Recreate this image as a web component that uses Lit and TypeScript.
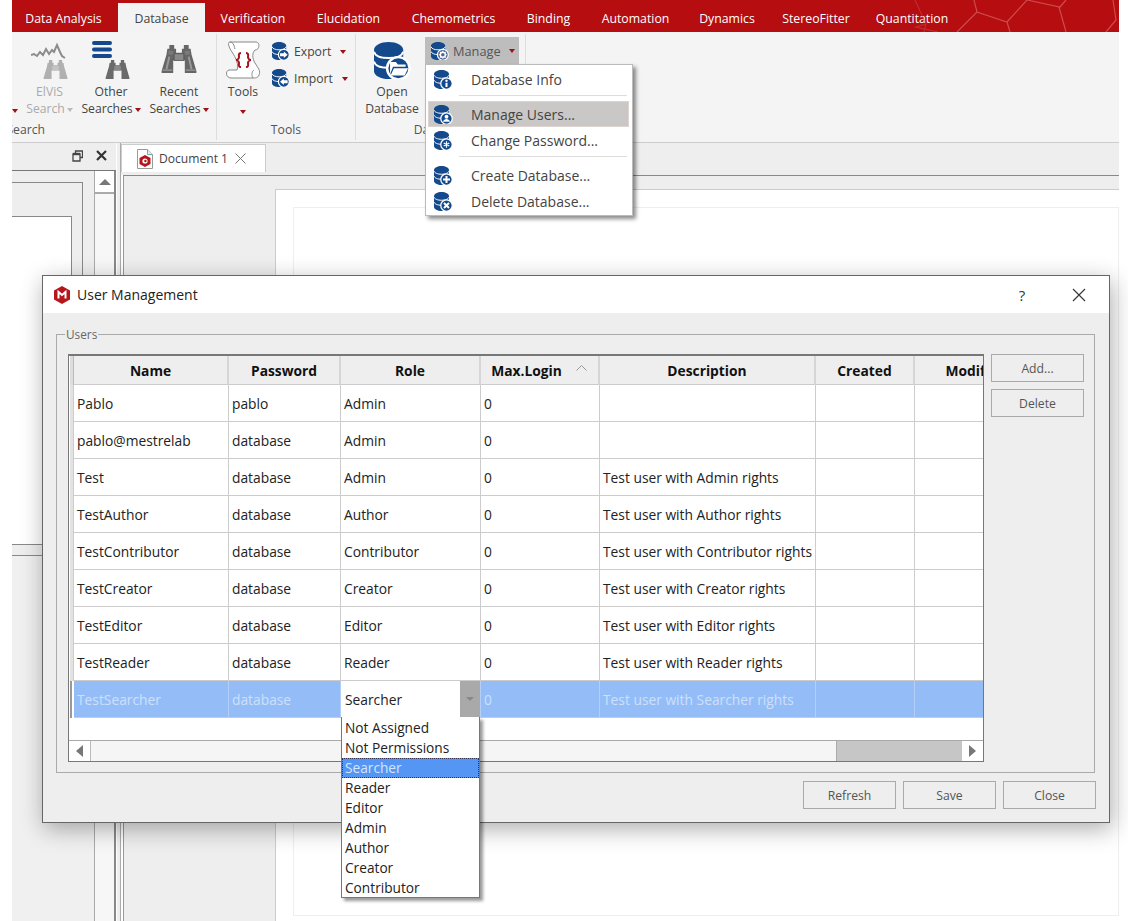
import { LitElement, html, css, svg } from "lit";
import { customElement } from "lit/decorators.js";

const NAVY = "#14498c";

function glyph(kind: string) {
  switch (kind) {
    case "info":
      return svg`<rect x="23" y="25.500" width="4" height="8.500" fill="#fff"/><circle cx="25" cy="21.500" r="2.400" fill="#fff"/>`;
    case "user":
      return svg`<circle cx="25" cy="23.500" r="3.800" fill="#fff"/><path d="M18 33.500c1-4 4-5.500 7-5.500s6 1.500 7 5.500z" fill="#fff"/>`;
    case "star":
      return svg`<g stroke="#fff" stroke-width="2.400"><path d="M25 20.500v13M19.400 23.800l11.200 6.400M30.600 23.800l-11.200 6.400"/></g>`;
    case "plus":
      return svg`<path d="M25 20v14M18 27h14" stroke="#fff" stroke-width="4"/>`;
    case "x":
      return svg`<path d="M20 22l10 10M30 22L20 32" stroke="#fff" stroke-width="4"/>`;
    case "right":
      return svg`<path d="M17 24h8v-4l8 7-8 7v-4h-8z" fill="#fff"/>`;
    case "left":
      return svg`<path d="M33 24h-8v-4l-8 7 8 7v-4h8z" fill="#fff"/>`;
    case "gear":
      return svg`<circle cx="25" cy="27" r="5.200" fill="none" stroke="#fff" stroke-width="3"/><g stroke="#fff" stroke-width="2.400"><path d="M25 18.500v3.400M25 32v3.400M16.500 27h3.400M30.100 27h3.400M19 21l2.400 2.400M28.600 30.600l2.400 2.400M31 21l-2.400 2.400M21.400 30.600L19 33"/></g>`;
    case "folder":
      return svg`<path d="M16.500 20.500h6l2 2.500h8v2.500H19.500l-3 7.500z" fill="#fff"/><path d="M20.500 27h14.500l-3.500 7.500H17z" fill="#fff"/>`;
  }
  return svg``;
}

function db(kind: string, size: number) {
  const bg = kind === "gear" ? "#4a6690" : NAVY;
  return html`<svg class="ic" width=${size} height=${size} viewBox="0 0 38 38">
    <path d="M0 8C0 3.500 7 0 15 0s15 3.500 15 8v22c0 4.500-7 8-15 8S0 34.500 0 30z" fill=${NAVY}/>
    <path d="M0 10c1 4 7 6.500 15 6.500S29 14 30 10M0 20c1 4 7 6.500 15 6.500S29 24 30 20" fill="none" stroke="#fff" stroke-width="2"/>
    <circle cx="25" cy="27" r="11.500" fill=${bg} stroke="#fff" stroke-width="2.500"/>
    ${glyph(kind)}
  </svg>`;
}

const BINOC = "M9 0h5v4h2v4h6V4h2V0h5v4h2l1 6 5 17v2H25V16h-12v13H1v-2L6 10l1-6h2z";

function binoc(color: string, w: number, h: number) {
  return html`<svg class="ic mt4" width=${w} height=${h} viewBox="0 0 38 30">
    <path d=${BINOC} fill=${color}/>
    <path d="M14 9h10v7H14z" fill="#8a8a8a" stroke="#555" stroke-width=".8"/>
    <path d="M8 6h5v4H8zM25 6h5v4h-5z" fill="#7a7a7a"/>
    <path d="M9 12l-3 13M29 12l3 13" stroke="#9a9a9a" stroke-width="2"/>
    <path d="M2 26h10M26 26h10" stroke="#9a9a9a" stroke-width="1.500"/>
  </svg>`;
}

const tabs: [string, number][] = [
  ["Data Analysis", 106],
  ["Database", 87],
  ["Verification", 96],
  ["Elucidation", 95],
  ["Chemometrics", 115],
  ["Binding", 75],
  ["Automation", 99],
  ["Dynamics", 84],
  ["StereoFitter", 94],
  ["Quantitation", 98],
];

const cols = [
  { n: "Name", w: 155 },
  { n: "Password", w: 112 },
  { n: "Role", w: 140 },
  { n: "Max.Login", w: 119 },
  { n: "Description", w: 216 },
  { n: "Created", w: 99 },
  { n: "Modified", w: 124 },
];

const users = [
  ["Pablo", "pablo", "Admin", ""],
  ["pablo@mestrelab", "database", "Admin", ""],
  ["Test", "database", "Admin", "Test user with Admin rights"],
  ["TestAuthor", "database", "Author", "Test user with Author rights"],
  ["TestContributor", "database", "Contributor", "Test user with Contributor rights"],
  ["TestCreator", "database", "Creator", "Test user with Creator rights"],
  ["TestEditor", "database", "Editor", "Test user with Editor rights"],
  ["TestReader", "database", "Reader", "Test user with Reader rights"],
  ["TestSearcher", "database", "Searcher", "Test user with Searcher rights"],
];

const roles = ["Not Assigned", "Not Permissions", "Searcher", "Reader", "Editor", "Admin", "Author", "Creator", "Contributor"];

@customElement("app-root")
export class AppRoot extends LitElement {
  static styles = css`
    :host { display: block; position: relative; width: 1128px; height: 921px; overflow: hidden; background: #fff;
      font-family: "Open Sans", "Noto Sans", sans-serif; color: #444; }
    .ic { display: block; flex: none; }
    .mt4 { margin-top: 4px; }
    .mt1 { margin-top: 1px; }
    .win { margin-left: 12px; width: 1107px; height: 921px; display: flex; flex-direction: column; }

    .top { position: relative; height: 32px; background: #b50d10; display: flex; flex: none; font-size: 12.300px; color: #fff; }
    .tab { display: flex; align-items: center; justify-content: center; height: 32px; padding-top: 5px; box-sizing: border-box; }
    .tab:first-child { padding-right: 3px; }
    .tab.on { background: #f3f3f3; color: #444; margin-top: 3px; height: 29px; padding-top: 2px; }
    .hex { position: absolute; right: 0; top: 0; }

    .ribbon { height: 110px; flex: none; display: flex; background: #f4f4f4; border-bottom: 1px solid #ccc; font-size: 12.200px; }
    .grp { display: flex; flex-direction: column; border-right: 1px solid #ddd; margin: 2px 0; box-sizing: border-box; overflow: hidden; }
    .g1 { width: 205px; } .g2 { width: 139px; } .g3 { width: 170px; }
    .acts { height: 87px; display: flex; flex: none; }
    .glabel { height: 17px; line-height: 17px; text-align: center; color: #555; white-space: nowrap; }
    .g1 .glabel { width: 33px; direction: rtl; overflow: hidden; text-align: left; }
    .big { display: flex; flex-direction: column; align-items: center; padding-top: 7px; box-sizing: border-box; line-height: 17px; white-space: nowrap; }
    .ibox { height: 42px; display: flex; align-items: flex-start; justify-content: center; flex: none; }
    .ln { height: 17px; display: flex; align-items: center; gap: 2px; }
    .dis { color: #aaa; }
    .ar { width: 0; height: 0; border: 3.500px solid transparent; border-top: 4px solid #a00f15; border-bottom: 0; flex: none; margin-top: 3px; }
    .ar.g { border-top-color: #bbb; }
    .ar.low { margin-top: 6px; }
    .stub { width: 10px; display: flex; align-items: flex-end; padding: 0 0 8px 0; box-sizing: border-box; }
    .b-elvis { width: 55px; }
    .b-other { width: 68px; }
    .b-recent { width: 68px; }
    .stack { display: flex; flex-direction: column; padding-top: 4px; }
    .row-btn { display: flex; align-items: center; height: 27px; gap: 4px; }
    .row-btn .ar { margin-left: 5px; margin-top: 0; }
    .row-btn .ic { margin-top: -2px; }
    .stack.t { margin-left: 8px; }
    .b-tools { width: 42px; margin-left: 5px; }
    .b-open { width: 62px; margin-left: 5px; }
    .mgbtn { margin: 3px 0 0 2px; width: 94px; height: 27px; background: #bdbdbd; display: flex; align-items: center; gap: 4px; padding-left: 6px; box-sizing: border-box; color: #555; font-size: 12.800px; }
    .mgbtn span { padding-top: 1px; }
    .mgbtn .ar { margin: 0 0 0 4px; }

    .low { flex: 1; display: flex; min-height: 0; }
    .dock { width: 104px; flex: none; display: flex; flex-direction: column; background: #eee; }
    .dhead { height: 27px; flex: none; display: flex; justify-content: flex-end; align-items: center; gap: 13px; padding: 0 9px 2px 0; box-sizing: border-box; background: #eee; }
    .dbody { flex: 1; display: flex; border-top: 1px solid #777; }
    .dmain { width: 82px; display: flex; flex-direction: column; }
    .dtop { height: 385px; flex: none; border-bottom: 1px solid #888; padding-top: 11px; box-sizing: border-box; }
    .fr1 { width: 71px; height: 363px; border: solid #888; border-width: 1px 1px 0 0; padding-top: 33px; box-sizing: border-box; }
    .fr2 { width: 60px; height: 329px; background: #fff; border: solid #888; border-width: 1px 1px 1px 0; box-sizing: border-box; }
    .dbot { flex: 1; background: #f0f0f0; }
    .vbar { flex: 1; background: #f7f7f7; border-left: 1px solid #aaa; border-right: 2px solid #888; display: flex; flex-direction: column; }
    .vup { height: 21px; background: #fff; border-bottom: 2px solid #aaa; display: flex; align-items: center; justify-content: center; }
    .tri-up { width: 0; height: 0; border: 6px solid transparent; border-bottom: 6px solid #777; border-top: 0; }
    .split { width: 3px; flex: none; background: #eee; margin-left: 1px; }
    .doc { flex: 1; display: flex; flex-direction: column; border-left: 1px solid #aaa; min-width: 0; }
    .dtabs { height: 32px; flex: none; background: #eee; padding-top: 1px; box-sizing: border-box; }
    .dtab { width: 145px; height: 28px; box-sizing: border-box; background: #fff; border: solid #ccc; border-width: 1px 1px 0 1px; display: flex; align-items: center; font-size: 12.100px; color: #444; padding-left: 15px; gap: 6px; }
    .dtab .cl { margin-left: 1px; }
    .frame { flex: 1; margin-left: 2px; border-left: 1px solid #999; border-top: 1px solid #888; background: #eee; padding: 13px 0 0 151px; display: flex; min-height: 0; }
    .page { flex: 1; background: #fff; border: solid #ccc; border-width: 1px 0 0 1px; padding: 17px 0 5px 17px; display: flex; }
    .sheet { flex: 1; border: 1px solid #eee; }

    .menu { position: absolute; left: 425px; top: 64px; width: 208px; height: 152px; box-sizing: border-box; background: #fff; border: 1px solid #bbb; box-shadow: 3px 3px 4px rgba(0,0,0,.45); padding: 1px 3px 0 2px; font-size: 14px; color: #444; }
    .mi { height: 26px; display: flex; align-items: center; padding-left: 6px; box-sizing: border-box; }
    .mi span { margin-left: 18px; }
    .mi.hl { background: #c9c8c7; outline: 1px solid #ddd3cf; outline-offset: -1px; }
    .sep { height: 1px; background: #ddd; margin: 3px 2px 5px 31px; }

    .dlg { position: absolute; left: 42px; top: 275px; width: 1068px; height: 548px; box-sizing: border-box; background: #eee; border: 1px solid #666; box-shadow: 2px 6px 22px rgba(0,0,0,.32); display: flex; flex-direction: column; }
    .dt { height: 37px; flex: none; background: #fff; display: flex; align-items: center; padding-left: 10px; font-size: 14px; color: #222; }
    .dt .ttl { margin-left: 6px; }
    .q { margin-left: auto; width: 20px; text-align: center; font-size: 15px; color: #333; margin-right: 40px; }
    .xb { margin-right: 23px; }
    .gb { margin: 21px 0 0 13px; width: 1039px; height: 439px; flex: none; box-sizing: border-box; border: 1px solid #aaa; padding: 0 10px 0 11px; display: flex; flex-direction: column; }
    .lg { align-self: flex-start; margin: -8px 0 0 -3px; height: 15px; line-height: 15px; padding: 0 1px; background: #eee; font-size: 11.800px; color: #666; }
    .gin { display: flex; gap: 7px; margin-top: 12px; }
    .table { width: 916px; height: 408px; flex: none; box-sizing: border-box; border: solid #777; border-width: 2px 1px 1px 1px; background: #fff; display: flex; flex-direction: column; overflow: hidden; font-size: 13.800px; color: #222; position: relative; }
    .tr { display: flex; flex: none; height: 37px; }
    .tr.h { height: 29px; background: #eee; }
    .rh { width: 5px; flex: none; box-sizing: border-box; background: #e2e2e2; border-right: 1px solid #ccc; border-left: 1px solid #fff; }
    .tr.h .rh { background: #ddd; border-right: 1px solid #bbb; }
    .th { flex: none; box-sizing: border-box; border-right: 2px solid #d6d6d6; border-bottom: 1px solid #ccc; display: flex; align-items: center; justify-content: center; font-weight: 700; color: #111; font-size: 13.800px; white-space: nowrap; position: relative; }
    .th.sort { padding-right: 26px; }
    .chev { position: absolute; right: 11px; top: 9px; }
    .td { flex: none; box-sizing: border-box; border-right: 1px solid #ccc; border-bottom: 1px solid #ccc; display: flex; align-items: center; padding-left: 3px; white-space: nowrap; overflow: hidden; }
    .tr.sel { background: #94bdf7; color: #cde0fb; }
    .tr.sel .td { border-color: #b3cef7; }
    .tr.sel .rh { background: #999; border-left: 1px solid #fff; border-right: 2px solid #fff; }
    .td.cb { padding: 0; }
    .combo { flex: 1; height: 36px; display: flex; background: #fff; color: #222; align-items: center; }
    .combo span { flex: 1; padding-left: 4px; }
    .drop { width: 20px; height: 36px; background: #a9a9a9; display: flex; align-items: center; justify-content: center; }
    .drop i { width: 0; height: 0; border: 4px solid transparent; border-top: 4px solid #888; border-bottom: 0; }
    .blank { flex: 1; }
    .hs { height: 21px; flex: none; display: flex; border-top: 1px solid #aaa; box-sizing: border-box; background: #f5f5f5; }
    .sb { width: 21px; background: #fff; display: flex; align-items: center; justify-content: center; flex: none; }
    .sb.l { border-right: 1px solid #bbb; }
    .track { flex: 1; }
    .thumb { width: 125px; background: #c6c6c6; border-left: 1px solid #aaa; flex: none; }
    .tri-l { width: 0; height: 0; border: 6px solid transparent; border-right: 7px solid #777; border-left: 0; }
    .tri-r { width: 0; height: 0; border: 6px solid transparent; border-left: 7px solid #777; border-right: 0; }
    .side { display: flex; flex-direction: column; gap: 7px; }
    .btn { width: 93px; height: 28px; box-sizing: border-box; border: 1px solid #aaa; background: #eee; display: flex; align-items: center; justify-content: center; font-size: 12.200px; color: #555; }
    .foot { display: flex; gap: 7px; justify-content: flex-end; margin: 8px 13px 0 0; }

    .list { position: absolute; left: 341px; top: 717px; width: 139px; height: 181px; box-sizing: border-box; background: #fff; border: 1px solid #777; border-top: 0; box-shadow: 3px 3px 3px rgba(0,0,0,.4); font-size: 13.700px; color: #222; padding-top: 1px; }
    .li { height: 20px; line-height: 20px; padding-left: 3px; box-sizing: border-box; white-space: nowrap; }
    .li.on { background: #5596f5; color: #d5e5fc; outline: 1px dotted #335; outline-offset: -1px; }
  `;

  private searchGroup() {
    return html`
      <div class="grp g1">
        <div class="acts">
          <div class="stub"><div class="ar"></div></div>
          <div class="big b-elvis dis">
            <div class="ibox">
              <svg class="ic" width="38" height="38" viewBox="0 0 38 38">
                <path d="M0 14l3-1 3 2 3-4 3 3 3-6 3 5 3-4 2 2 3-7 3 7 2 4 3 2" fill="none" stroke="#8c8c8c" stroke-width="2"/>
                <g transform="translate(12 19) scale(.66)">
                  <path d=${BINOC} fill="#b0b0b0"/>
                  <path d="M14 9h10v7H14z" fill="#c4c4c4"/>
                </g>
              </svg>
            </div>
            <div class="ln">ElViS</div>
            <div class="ln">Search<div class="ar g"></div></div>
          </div>
          <div class="big b-other">
            <div class="ibox">
              <svg class="ic" width="40" height="38" viewBox="0 0 40 38">
                <path d="M3 2h16M3 8.500h16M3 15h16" stroke=${NAVY} stroke-width="4" stroke-linecap="round"/>
                <g transform="translate(14 19) scale(.66)">
                  <path d=${BINOC} fill="#6a6a6a"/>
                  <path d="M14 9h10v7H14z" fill="#8a8a8a"/>
                </g>
              </svg>
            </div>
            <div class="ln">Other</div>
            <div class="ln">Searches<div class="ar"></div></div>
          </div>
          <div class="big b-recent">
            <div class="ibox">${binoc("#666", 38, 29)}</div>
            <div class="ln">Recent</div>
            <div class="ln">Searches<div class="ar"></div></div>
          </div>
        </div>
        <div class="glabel">Search</div>
      </div>`;
  }

  private toolsGroup() {
    return html`
      <div class="grp g2">
        <div class="acts">
          <div class="big b-tools">
            <div class="ibox">
              <svg class="ic" width="36" height="38" viewBox="0 0 36 38">
                <path d="M5 1H31C35 1 35 9 30 9C27 12 27 17 30 22C33 27 36 30 34 34C33 37 30 37 28 37H6C1 37 0 30 4 29H12C14 24 11 17 7 11C4 7 2 1 5 1z" fill="#fff" stroke="#888"/>
                <path d="M29 29c-2 1-3 5-1 8M5 1c3 0 4 3 5 7" fill="none" stroke="#888"/>
                <path d="M16 12c-3 0-2 3-2 4s-1 3-3 3c2 0 3 2 3 3s-1 4 2 4M21 12c3 0 2 3 2 4s1 3 3 3c-2 0-3 2-3 3s1 4-2 4" fill="none" stroke="#a3141a" stroke-width="2"/>
              </svg>
            </div>
            <div class="ln">Tools</div>
            <div class="ln"><div class="ar low"></div></div>
          </div>
          <div class="stack t">
            <div class="row-btn">${db("right", 18)}<span>Export</span><div class="ar"></div></div>
            <div class="row-btn">${db("left", 18)}<span>Import</span><div class="ar"></div></div>
          </div>
        </div>
        <div class="glabel">Tools</div>
      </div>`;
  }

  private dbGroup() {
    return html`
      <div class="grp g3">
        <div class="acts">
          <div class="big b-open">
            <div class="ibox"><div class="mt1">${db("folder", 37)}</div></div>
            <div class="ln">Open</div>
            <div class="ln">Database</div>
          </div>
          <div class="mgbtn">${db("gear", 18)}<span>Manage</span><div class="ar"></div></div>
        </div>
        <div class="glabel">Database</div>
      </div>`;
  }

  private logo(size: number) {
    return html`<svg class="ic" width=${size} height=${size} viewBox="0 0 18 18">
      <path d="M9 0l8 4.500v9L9 18l-8-4.500v-9z" fill="#b5151b"/>
      <path d="M5.500 12.500V6l3.500 3 3.500-3v6.500" fill="none" stroke="#fff" stroke-width="2"/>
    </svg>`;
  }

  render() {
    return html`
      <div class="win">
        <div class="top">
          ${tabs.map(([t, w], i) => html`<div class="tab ${i === 1 ? "on" : ""}" style="width:${w}px">${t}</div>`)}
          <svg class="hex" width="205" height="32" viewBox="0 0 205 32" fill="none" stroke="#cf4b4c" stroke-width="1.200">
            <path d="M1 0l11 24-2 8M12 24l-10 3 22 5" stroke-opacity=".5"/>
            <path d="M60 0l3 12 30 10 20-22M63 12L43 32M93 22l3 10"/>
            <path d="M113 0l33 7 6-7M145 7l7 25M199 0l3 20-10 12"/>
          </svg>
        </div>
        <div class="ribbon">
          ${this.searchGroup()}
          ${this.toolsGroup()}
          ${this.dbGroup()}
        </div>
        <div class="low">
          <div class="dock">
            <div class="dhead">
              <svg class="ic" width="11" height="12" viewBox="0 0 11 12" fill="none" stroke="#444" stroke-width="1.300"><path d="M3.500 3V1h7v6.500H8M1 4h7v7H1z"/><path d="M1 4h7" stroke-width="2.400"/></svg>
              <svg class="ic" width="11" height="11" viewBox="0 0 11 11"><path d="M1 1l9 9M10 1l-9 9" stroke="#333" stroke-width="2.200"/></svg>
            </div>
            <div class="dbody">
              <div class="dmain">
                <div class="dtop"><div class="fr1"><div class="fr2"></div></div></div>
                <div class="dbot"></div>
              </div>
              <div class="vbar"><div class="vup"><div class="tri-up"></div></div></div>
            </div>
          </div>
          <div class="split"></div>
          <div class="doc">
            <div class="dtabs">
              <div class="dtab">
                <svg class="ic" width="16" height="20" viewBox="0 0 16 20">
                  <path d="M.5.500h10l5 5v14H.5z" fill="#fff" stroke="#999"/>
                  <path d="M10.500.500v5h5" fill="#dff0ea" stroke="#7aa"/>
                  <path d="M8 6l5.500 3v6L8 18l-5.500-3V9z" fill="#b5151b"/>
                  <circle cx="8" cy="12" r="2.600" fill="#fff"/>
                  <circle cx="8.400" cy="12" r="1.200" fill="#b5151b"/>
                </svg>
                <span>Document 1</span>
                <svg class="ic cl" width="11" height="11" viewBox="0 0 11 11"><path d="M.5.500l10 10M10.500.500l-10 10" stroke="#777"/></svg>
              </div>
            </div>
            <div class="frame"><div class="page"><div class="sheet"></div></div></div>
          </div>
        </div>
      </div>

      <div class="menu">
        <div class="mi">${db("info", 19)}<span>Database Info</span></div>
        <div class="sep"></div>
        <div class="mi hl">${db("user", 19)}<span>Manage Users...</span></div>
        <div class="mi">${db("star", 19)}<span>Change Password...</span></div>
        <div class="sep"></div>
        <div class="mi">${db("plus", 19)}<span>Create Database...</span></div>
        <div class="mi">${db("x", 19)}<span>Delete Database...</span></div>
      </div>

      <div class="dlg">
        <div class="dt">
          ${this.logo(18)}
          <span class="ttl">User Management</span>
          <span class="q">?</span>
          <svg class="ic xb" width="14" height="14" viewBox="0 0 14 14"><path d="M1 1l12 12M13 1L1 13" stroke="#333" stroke-width="1.100"/></svg>
        </div>
        <div class="gb">
          <div class="lg">Users</div>
          <div class="gin">
            <div class="table">
              <div class="tr h">
                <div class="rh"></div>
                ${cols.map((c) => html`<div class="th ${c.n === "Max.Login" ? "sort" : ""}" style="width:${c.w}px">${c.n}${c.n === "Max.Login"
                  ? html`<svg class="chev" width="11" height="6" viewBox="0 0 11 6"><path d="M.5 5.500l5-5 5 5" fill="none" stroke="#999"/></svg>` : ""}</div>`)}
              </div>
              ${users.map((u, i) => {
                const sel = i === users.length - 1;
                return html`<div class="tr ${sel ? "sel" : ""}">
                  <div class="rh"></div>
                  <div class="td" style="width:${cols[0].w}px">${u[0]}</div>
                  <div class="td" style="width:${cols[1].w}px">${u[1]}</div>
                  ${sel
                    ? html`<div class="td cb" style="width:${cols[2].w}px"><div class="combo"><span>${u[2]}</span><div class="drop"><i></i></div></div></div>`
                    : html`<div class="td" style="width:${cols[2].w}px">${u[2]}</div>`}
                  <div class="td" style="width:${cols[3].w}px">0</div>
                  <div class="td" style="width:${cols[4].w}px">${u[3]}</div>
                  <div class="td" style="width:${cols[5].w}px"></div>
                  <div class="td" style="width:${cols[6].w}px"></div>
                </div>`;
              })}
              <div class="blank"></div>
              <div class="hs">
                <div class="sb l"><div class="tri-l"></div></div>
                <div class="track"></div>
                <div class="thumb"></div>
                <div class="sb"><div class="tri-r"></div></div>
              </div>
            </div>
            <div class="side">
              <div class="btn">Add...</div>
              <div class="btn">Delete</div>
            </div>
          </div>
        </div>
        <div class="foot">
          <div class="btn">Refresh</div>
          <div class="btn">Save</div>
          <div class="btn">Close</div>
        </div>
      </div>

      <div class="list">
        ${roles.map((r) => html`<div class="li ${r === "Searcher" ? "on" : ""}">${r}</div>`)}
      </div>
    `;
  }
}
